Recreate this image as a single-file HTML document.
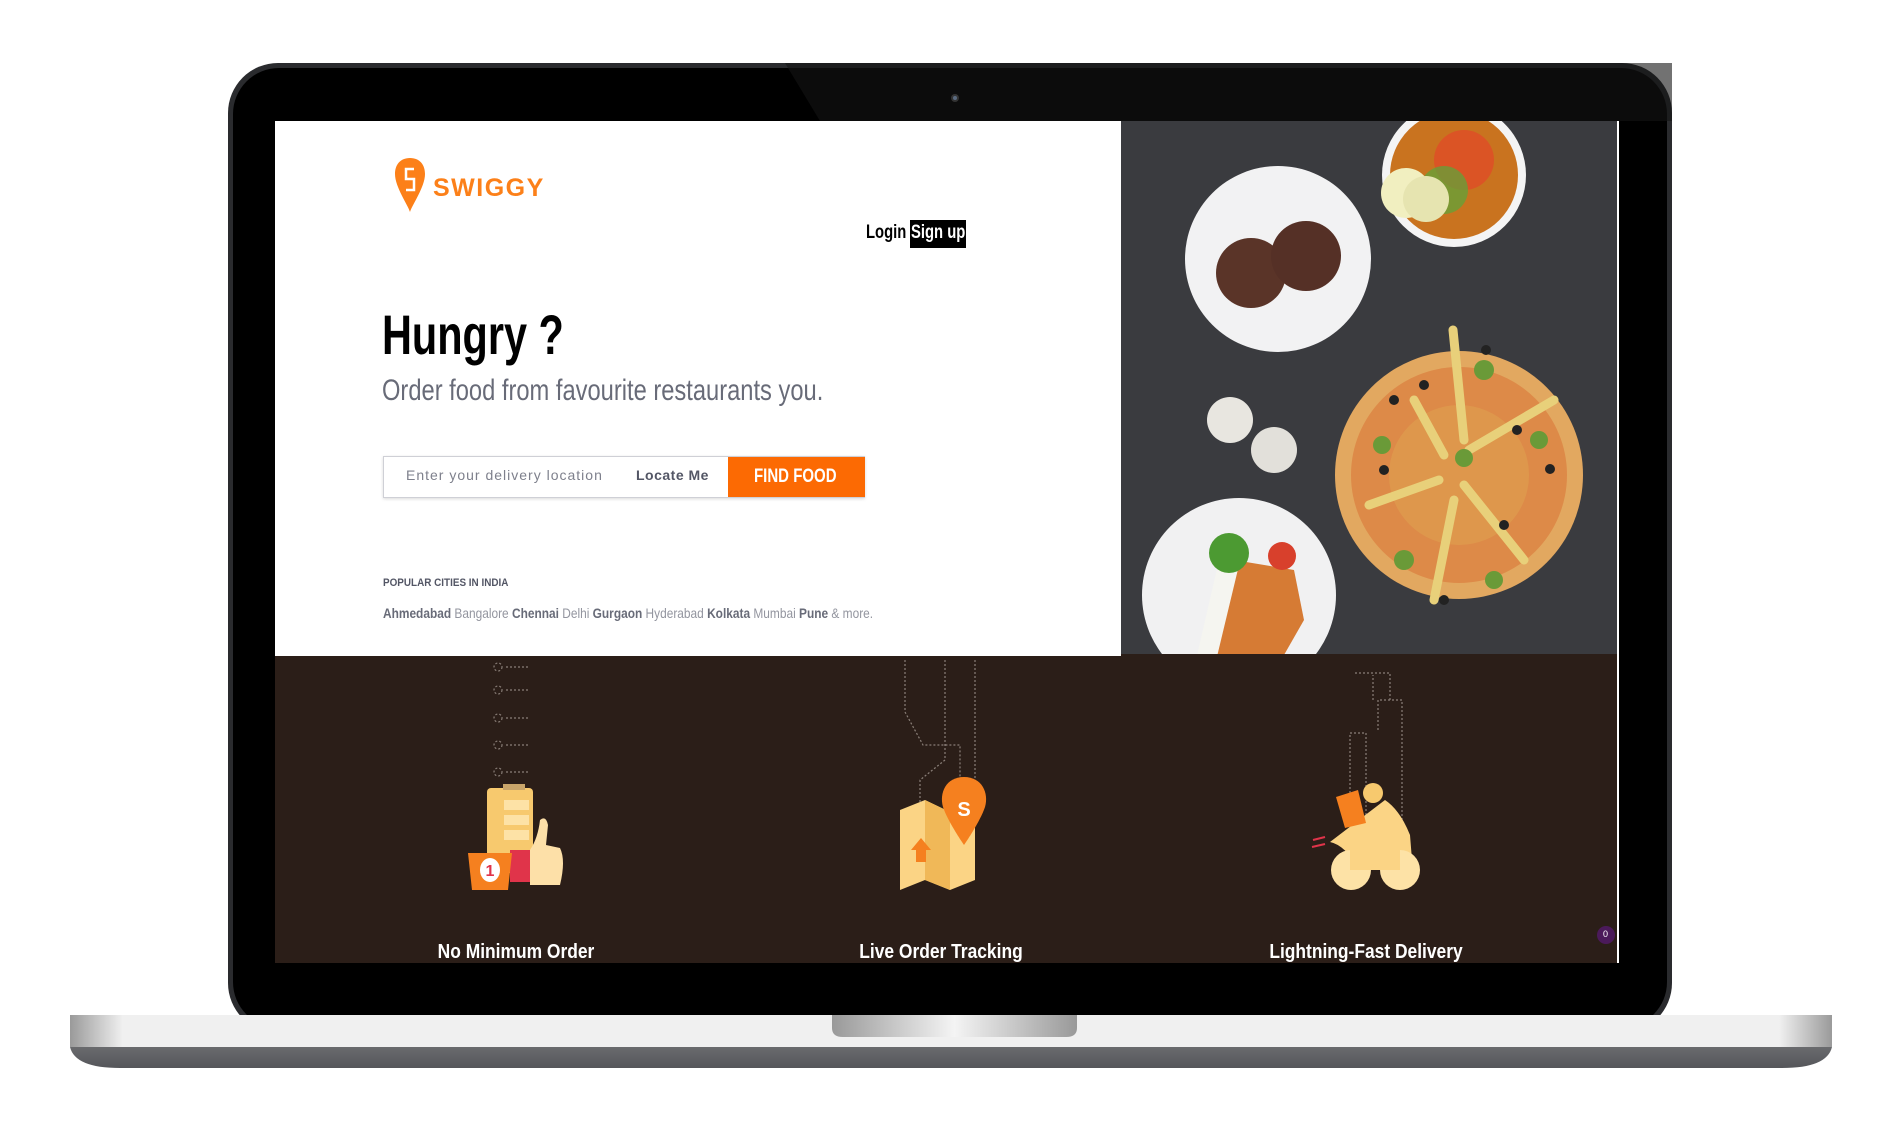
<!DOCTYPE html>
<html><head><meta charset="utf-8"><style>
html,body{margin:0;padding:0;background:#fff;width:1895px;height:1139px;overflow:hidden;font-family:"Liberation Sans",sans-serif}
.a{position:absolute;white-space:nowrap;transform-origin:0 0}
.c{transform-origin:50% 0}
</style></head><body>
<svg class="a" style="left:0;top:0" width="1895" height="1139" viewBox="0 0 1895 1139">
<defs>
<linearGradient id="base" x1="0" y1="0" x2="1" y2="0">
<stop offset="0" stop-color="#9a9a9a"/><stop offset="0.03" stop-color="#f0f0f0"/><stop offset="0.97" stop-color="#f0f0f0"/><stop offset="1" stop-color="#9a9a9a"/></linearGradient>
<linearGradient id="baseb" x1="0" y1="0" x2="0" y2="1"><stop offset="0" stop-color="#8a8a8c"/><stop offset="1" stop-color="#55565a"/></linearGradient>
<linearGradient id="notch" x1="0" y1="0" x2="1" y2="0"><stop offset="0" stop-color="#999"/><stop offset="0.5" stop-color="#f4f4f4"/><stop offset="1" stop-color="#999"/></linearGradient>
<clipPath id="fc"><rect x="1121" y="121" width="496" height="533"/></clipPath>
</defs>
<rect x="228" y="63" width="1444" height="970" rx="50" fill="#2a2b2e"/>
<rect x="233" y="68" width="1434" height="960" rx="46" fill="#000"/>
<polygon points="785,63 1672,63 1672,121 820,121" fill="#141414" opacity="0.6"/>
<circle cx="955" cy="98" r="4" fill="#333"/><circle cx="955" cy="98" r="2" fill="#5a6a80"/>
<path d="M70 1015 H1832 V1047 Q1827 1068 1782 1068 H120 Q75 1068 70 1047 Z" fill="url(#baseb)"/>
<rect x="70" y="1015" width="1762" height="32" fill="url(#base)"/>
<path d="M832 1015 H1077 V1028 Q1077 1037 1066 1037 H843 Q832 1037 832 1028 Z" fill="url(#notch)"/>
<rect x="275" y="121" width="1342" height="842" fill="#fff"/>
<rect x="275" y="656" width="1342" height="307" fill="#2b1e18"/>
<rect x="1121" y="121" width="496" height="533" fill="#3a3b3f"/>
<g clip-path="url(#fc)" transform="translate(-6,0)">
<circle cx="1284" cy="259" r="93" fill="#f2f2f3"/>
<circle cx="1257" cy="273" r="35" fill="#5a3428"/>
<circle cx="1312" cy="256" r="35" fill="#553026"/>
<circle cx="1460" cy="175" r="72" fill="#f4f4f4"/>
<circle cx="1460" cy="175" r="64" fill="#c9731f"/>
<circle cx="1470" cy="160" r="30" fill="#e8402a" opacity=".6"/>
<circle cx="1450" cy="190" r="24" fill="#5aa63a" opacity=".7"/>
<circle cx="1412" cy="193" r="25" fill="#f1efc0"/>
<circle cx="1432" cy="199" r="23" fill="#e6e4b0"/>
<circle cx="1236" cy="420" r="23" fill="#e8e6e0"/>
<circle cx="1280" cy="450" r="23" fill="#e2e0da"/>
<circle cx="1465" cy="475" r="124" fill="#e2a860"/>
<circle cx="1465" cy="475" r="108" fill="#dd8a48"/>
<circle cx="1465" cy="475" r="70" fill="#e0a050" opacity=".6"/>
<g stroke="#e8d07a" stroke-width="9" stroke-linecap="round">
<line x1="1459" y1="330" x2="1470" y2="440"/><line x1="1560" y1="400" x2="1475" y2="450"/>
<line x1="1420" y1="400" x2="1450" y2="455"/><line x1="1470" y1="485" x2="1530" y2="560"/>
<line x1="1460" y1="500" x2="1440" y2="600"/><line x1="1445" y1="480" x2="1375" y2="505"/></g>
<g fill="#222"><circle cx="1400" cy="400" r="5"/><circle cx="1430" cy="385" r="5"/><circle cx="1523" cy="430" r="5"/><circle cx="1556" cy="469" r="5"/><circle cx="1390" cy="470" r="5"/><circle cx="1510" cy="525" r="5"/><circle cx="1450" cy="600" r="5"/><circle cx="1492" cy="350" r="5"/></g>
<g fill="#6a9a38"><circle cx="1490" cy="370" r="10"/><circle cx="1388" cy="445" r="9"/><circle cx="1545" cy="440" r="9"/><circle cx="1410" cy="560" r="10"/><circle cx="1500" cy="580" r="9"/><circle cx="1470" cy="458" r="9"/></g>
<circle cx="1245" cy="595" r="97" fill="#f1f1f2"/>
<polygon points="1205,690 1240,560 1300,570 1310,620 1270,690" fill="#d67b34"/>
<polygon points="1195,690 1225,560 1245,565 1215,690" fill="#f5f5f0"/>
<circle cx="1235" cy="553" r="20" fill="#4c9a32"/>
<circle cx="1288" cy="556" r="14" fill="#d8402c"/>
</g>
<rect x="1121" y="654" width="496" height="3" fill="#2b1e18"/>
<rect x="1617" y="121" width="2" height="842" fill="#fff"/>
<g stroke="#8a7f78" stroke-width="1.2" stroke-dasharray="2 2" fill="none">
<circle cx="498" cy="667" r="4"/><line x1="506" y1="667" x2="530" y2="667"/>
<circle cx="498" cy="690" r="4"/><line x1="506" y1="690" x2="530" y2="690"/>
<circle cx="498" cy="718" r="4"/><line x1="506" y1="718" x2="530" y2="718"/>
<circle cx="498" cy="745" r="4"/><line x1="506" y1="745" x2="530" y2="745"/>
<circle cx="498" cy="772" r="4"/><line x1="506" y1="772" x2="530" y2="772"/>
</g>
<rect x="487" y="788" width="46" height="85" rx="4" fill="#f7c96e"/>
<rect x="503" y="784" width="22" height="6" fill="#c9a56a"/>
<g fill="#fde2a6"><rect x="504" y="800" width="25" height="10"/><rect x="504" y="815" width="25" height="10"/><rect x="504" y="830" width="25" height="10"/></g>
<rect x="510" y="850" width="22" height="32" fill="#e0344a"/>
<path d="M530 850 Q538 838 540 820 Q546 815 548 825 L546 845 L560 848 Q566 860 560 885 L530 885 Z" fill="#fde0a8"/>
<polygon points="468,853 512,853 508,890 472,890" fill="#f5801f"/>
<ellipse cx="490" cy="870" rx="10" ry="12" fill="#fff"/>
<text x="490" y="876" font-size="16" font-weight="bold" fill="#e0344a" text-anchor="middle" font-family="Liberation Sans">1</text>
<g stroke="#8a7f78" stroke-width="1.2" stroke-dasharray="2 2" fill="none">
<path d="M905 660 V712 L923 745 H960 V790"/><path d="M945 660 V740 L945 760 L920 780 V810"/><path d="M975 660 V790"/></g>
<path d="M900 810 L925 800 L950 812 L975 802 V880 L950 890 L925 880 L900 890 Z" fill="#fbd485"/>
<path d="M925 800 L950 812 V890 L925 880 Z" fill="#f0b858"/>
<polygon points="911,850 921,838 931,850 926,850 926,862 916,862 916,850" fill="#f5801f"/>
<path d="M964 777 C946 777 939 793 943 807 C948 822 964 845 964 845 C964 845 980 822 985 807 C989 793 982 777 964 777 Z" fill="#f5801f"/>
<text x="964" y="816" font-size="20" font-weight="bold" fill="#fff" text-anchor="middle" font-family="Liberation Sans">S</text>
<g stroke="#8a7f78" stroke-width="1.2" stroke-dasharray="2 2" fill="none">
<path d="M1350 825 V733 H1366 V825"/><path d="M1355 673 H1390 V700"/><path d="M1378 730 V700 H1402 V820"/><path d="M1373 700 V675"/></g>
<path d="M1385 800 Q1400 810 1410 835 L1412 860 L1360 870 Q1345 845 1330 842 Z" fill="#fbd485"/>
<circle cx="1373" cy="793" r="10" fill="#f7c96e"/>
<polygon points="1336,797 1358,790 1366,823 1345,828" fill="#f5801f"/>
<circle cx="1351" cy="870" r="20" fill="#fde2a6"/><circle cx="1400" cy="870" r="20" fill="#fde2a6"/>
<rect x="1350" y="840" width="50" height="30" fill="#fbd485"/>
<g stroke="#e0344a" stroke-width="2"><line x1="1313" y1="840" x2="1325" y2="837"/><line x1="1312" y1="847" x2="1325" y2="844"/></g>
<circle cx="1606" cy="935" r="9" fill="#4b1a5a"/>
</svg>
<svg class="a" style="left:394px;top:157px" width="32" height="56" viewBox="0 0 32 56"><path d="M16 1 C6 1 1 8 1 17 C1 30 14 48 16 55 C18 48 31 30 31 17 C31 8 26 1 16 1 Z" fill="#fc8019"/><path d="M20 12 H12 V22 H20 V33 H12" stroke="#fff" stroke-width="2.5" fill="none"/></svg>
<div class="a" style="left:433px;top:174px;font-size:25px;font-weight:bold;color:#fc8019;letter-spacing:1.5px">SWIGGY</div>
<div class="a" style="left:866px;top:222px;font-size:19px;font-weight:bold;color:#000;transform:scaleX(.78)">Login</div>
<div class="a" style="left:910px;top:220px;height:28px;width:56px;background:#000"></div>
<div class="a" style="left:911px;top:222px;font-size:19px;font-weight:bold;color:#fff;transform:scaleX(.78)">Sign up</div>
<div class="a" style="left:382px;top:302px;font-size:56px;font-weight:bold;color:#000;transform:scaleX(.74)">Hungry ?</div>
<div class="a" style="left:382px;top:374px;font-size:30px;color:#686b78;transform:scaleX(.79)">Order food from favourite restaurants you.</div>
<div class="a" style="left:383px;top:456px;width:480px;height:40px;border:1px solid #cfd0d6;box-shadow:0 1px 3px rgba(0,0,0,.15);background:#fff"></div>
<div class="a" style="left:406px;top:467px;font-size:14px;color:#7e808c;letter-spacing:1px">Enter your delivery location</div>
<div class="a" style="left:636px;top:467px;font-size:14px;color:#535665;font-weight:bold;letter-spacing:.5px">Locate Me</div>
<div class="a" style="left:728px;top:457px;width:137px;height:40px;background:#fc6a03"></div>
<div class="a" style="left:754px;top:466px;font-size:19px;font-weight:bold;color:#fff;transform:scaleX(.79)">FIND FOOD</div>
<div class="a" style="left:383px;top:577px;font-size:11px;font-weight:bold;color:#535665;transform:scaleX(.9)">POPULAR CITIES IN INDIA</div>
<div class="a" style="left:383px;top:605px;font-size:14px;color:#93959f;transform:scaleX(.85)"><b style="color:#686b78">Ahmedabad</b> Bangalore <b style="color:#686b78">Chennai</b> Delhi <b style="color:#686b78">Gurgaon</b> Hyderabad <b style="color:#686b78">Kolkata</b> Mumbai <b style="color:#686b78">Pune</b> &amp; more.</div>
<div class="a c" style="left:366px;top:941px;width:300px;text-align:center;font-size:20px;font-weight:bold;color:#fff;transform:scaleX(.87)">No Minimum Order</div>
<div class="a c" style="left:791px;top:941px;width:300px;text-align:center;font-size:20px;font-weight:bold;color:#fff;transform:scaleX(.87)">Live Order Tracking</div>
<div class="a c" style="left:1216px;top:941px;width:300px;text-align:center;font-size:20px;font-weight:bold;color:#fff;transform:scaleX(.87)">Lightning-Fast Delivery</div>
<div class="a" style="left:1603px;top:929px;font-size:9px;color:#fff">0</div>
</body></html>
